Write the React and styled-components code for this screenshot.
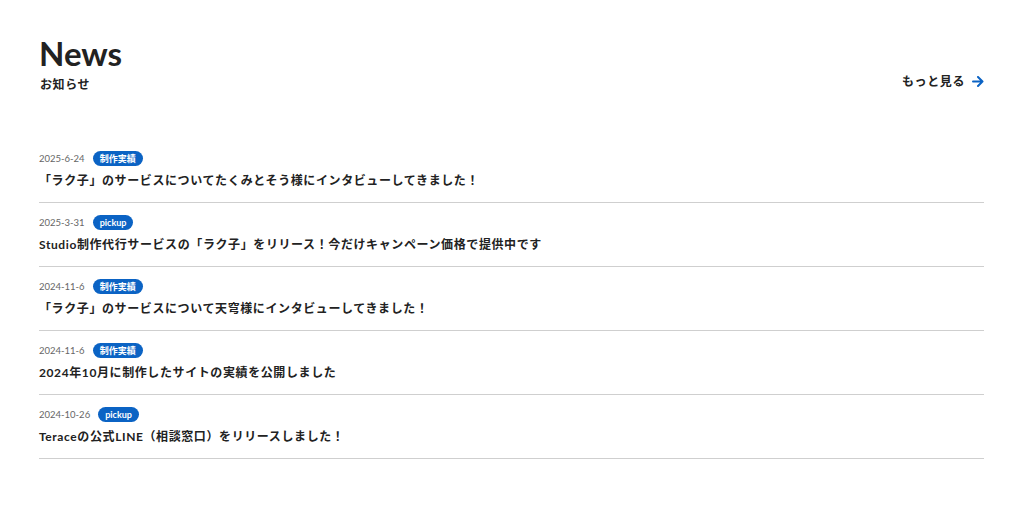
import React from "react";
import styled, { createGlobalStyle } from "styled-components";

const Global = createGlobalStyle`
  html, body { margin: 0; padding: 0; background: #fff; }
  body { font-family: "Lato", "Noto Sans CJK JP", sans-serif; color: #222; }
`;

const Page = styled.section`
  padding: 36px 40px 0 39px;
`;

const Header = styled.div`
  display: flex;
  justify-content: space-between;
  align-items: flex-end;
`;

const TitleBlock = styled.div`
  display: flex;
  flex-direction: column;
`;

const Title = styled.h2`
  margin: 0;
  font-family: "Lato", sans-serif;
  font-weight: 700;
  font-size: 33px;
  line-height: 34px;
  color: #222;
`;

const Sub = styled.p`
  margin: 6px 0 0 1px;
  font-family: "Noto Sans CJK JP", sans-serif;
  font-weight: 700;
  font-size: 12px;
  line-height: 16px;
  letter-spacing: 0.05em;
  color: #222;
`;

const More = styled.a`
  display: flex;
  align-items: center;
  gap: 7px;
  margin-bottom: 3px;
  font-family: "Noto Sans CJK JP", sans-serif;
  font-weight: 700;
  font-size: 12px;
  letter-spacing: 0.05em;
  line-height: 16px;
  color: #222;
  text-decoration: none;
`;

const List = styled.ul`
  list-style: none;
  margin: 47px 0 0;
  padding: 0;
`;

const Item = styled.li`
  padding: 12px 0 12px;
  border-bottom: 1px solid #cfcfcf;
  display: flex;
  flex-direction: column;
  gap: 6px;
`;

const Meta = styled.div`
  display: flex;
  align-items: center;
  gap: 8px;
  height: 15px;
`;

const Date = styled.span`
  font-family: "Lato", sans-serif;
  font-size: 9.5px;
  line-height: 15px;
  color: #666;
`;

const Tag = styled.span`
  display: inline-flex;
  align-items: center;
  height: 15px;
  padding: 0 7px;
  border-radius: 8px;
  background: #0b63c4;
  color: #fff;
  font-family: "Lato", "Noto Sans CJK JP", sans-serif;
  font-weight: 700;
  font-size: 9px;
  line-height: 1;
`;

const ItemTitle = styled.p`
  margin: 0;
  font-family: "Lato", "Noto Sans CJK JP", sans-serif;
  font-weight: 700;
  font-size: 12px;
  line-height: 18px;
  letter-spacing: 0.05em;
  color: #222;
`;

const Arrow = () => (
  <svg width="12" height="11" viewBox="0 0 12 11" fill="none">
    <path d="M1 5.5h9.5M6 1l4.5 4.5L6 10" stroke="#0b63c4" strokeWidth="2" strokeLinecap="round" strokeLinejoin="round" />
  </svg>
);

const news = [
  { date: "2025-6-24", tag: "制作実績", title: "「ラク子」のサービスについてたくみとそう様にインタビューしてきました！" },
  { date: "2025-3-31", tag: "pickup", title: "Studio制作代行サービスの「ラク子」をリリース！今だけキャンペーン価格で提供中です" },
  { date: "2024-11-6", tag: "制作実績", title: "「ラク子」のサービスについて天穹様にインタビューしてきました！" },
  { date: "2024-11-6", tag: "制作実績", title: "2024年10月に制作したサイトの実績を公開しました" },
  { date: "2024-10-26", tag: "pickup", title: "Teraceの公式LINE（相談窓口）をリリースしました！" },
];

export default function App() {
  return (
    <>
      <Global />
      <Page>
        <Header>
          <TitleBlock>
            <Title>News</Title>
            <Sub>お知らせ</Sub>
          </TitleBlock>
          <More href="#">
            もっと見る
            <Arrow />
          </More>
        </Header>
        <List>
          {news.map((n, i) => (
            <Item key={i}>
              <Meta>
                <Date>{n.date}</Date>
                <Tag>{n.tag}</Tag>
              </Meta>
              <ItemTitle>{n.title}</ItemTitle>
            </Item>
          ))}
        </List>
      </Page>
    </>
  );
}
